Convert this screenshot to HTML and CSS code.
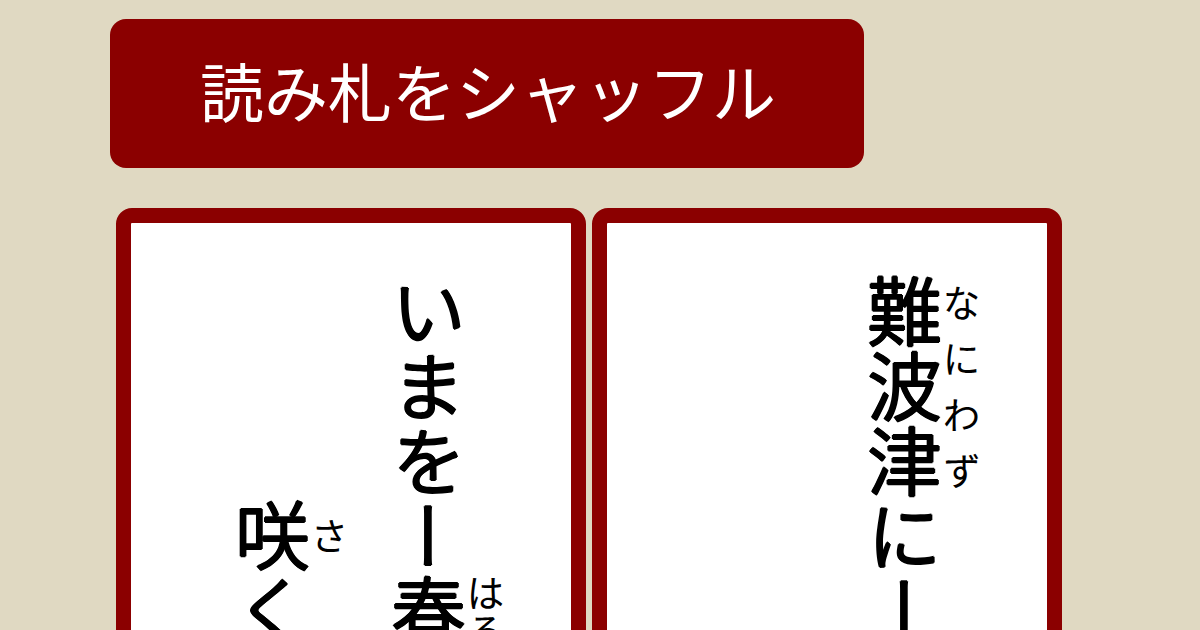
FILE: index.html
```html
<!DOCTYPE html>
<html lang="ja">
<head>
<meta charset="utf-8">
<title>百人一首 読み札</title>
<link rel="stylesheet" href="styles.css">
</head>
<body>
<main class="page">
  <button class="shuffle" type="button">読み札をシャッフル</button>
  <section class="cards">
    <article class="card">
      <p class="verse">
        <span class="line">いまをー<ruby>春<rt>はる</rt></ruby></span>
        <span class="line lower"><ruby>咲<rt>さ</rt></ruby>く</span>
      </p>
    </article>
    <article class="card">
      <p class="verse">
        <span class="line"><ruby>難波津<rt>なにわず</rt></ruby>にー</span>
      </p>
    </article>
  </section>
</main>
</body>
</html>
```
FILE: styles.css
```css
* {
  box-sizing: border-box;
}

body {
  margin: 0;
  background: #e0d9c2;
  font-family: "Noto Sans CJK JP", sans-serif;
}

.page {
  height: 100vh;
  padding: 19px 110px 0;
  overflow: hidden;
}

.shuffle {
  display: block;
  padding: 22px 88px 31px 90px;
  border: 0;
  border-radius: 16px;
  background: #8b0000;
  color: #fff;
  font-family: inherit;
  font-size: 64px;
  line-height: 96px;
  white-space: nowrap;
}

.cards {
  display: flex;
  gap: 6px;
  margin: 40px 28px 0 6px;
}

.card {
  flex: 1;
  height: 700px;
  padding: 51px 65px 0 0;
  border: 15px solid #8b0000;
  border-radius: 16px;
  background: #fff;
  color: #000;
  writing-mode: vertical-rl;
}

.verse {
  margin: 0;
  font-size: 75px;
  font-weight: 350;
  line-height: 156px;
  white-space: nowrap;
  text-shadow: 1px 0 #000, -1px 0 #000, 0 1px #000, 0 -1px #000;
}

.line {
  display: block;
}

.lower {
  padding-top: 224px;
}

rt {
  font-size: 38px;
  font-weight: 400;
  line-height: 40px;
  text-shadow: none;
}
```
